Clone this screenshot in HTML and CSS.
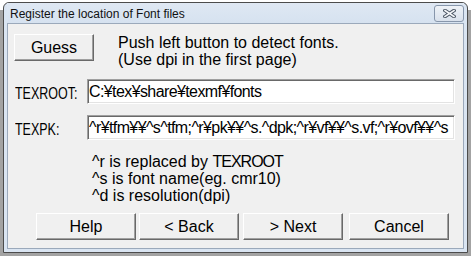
FILE: index.html
```html
<!DOCTYPE html>
<html lang="en">
<head>
    <meta charset="UTF-8">
    <title>Register the location of Font files</title>
    <link rel="stylesheet" href="styles.css">
</head>
<body>

    <div class="window">
        <div class="titlebar">
            <span class="title">Register the location of Font files</span>
            <button class="close-btn" aria-label="Close">
                <svg width="13" height="9" viewBox="0 0 13 9">
                    <path d="M2 1.5 L11 7.5 M11 1.5 L2 7.5" stroke="#4b5665" stroke-width="3.6" stroke-linecap="square"/>
                    <path d="M2 1.5 L11 7.5 M11 1.5 L2 7.5" stroke="#f4f6f9" stroke-width="1.6" stroke-linecap="square"/>
                </svg>
            </button>
        </div>

        <div class="client">
            <div class="guess-row">
                <button class="btn guess-btn">Guess</button>
                <p class="hint">Push left button to detect fonts.<br>(Use dpi in the first page)</p>
            </div>

            <div class="field">
                <label for="texroot"><span>TEXROOT:</span></label>
                <input id="texroot" type="text" value="C:¥tex¥share¥texmf¥fonts">
            </div>
            <div class="field">
                <label for="texpk"><span>TEXPK:</span></label>
                <input id="texpk" type="text" value="^r¥tfm¥¥^s^tfm;^r¥pk¥¥^s.^dpk;^r¥vf¥¥^s.vf;^r¥ovf¥¥^s">
            </div>

            <div class="legend">
                <p>^r is replaced by <span class="caps">TEXROOT</span></p>
                <p>^s is font name(eg. cmr10)</p>
                <p>^d is resolution(dpi)</p>
            </div>

            <div class="nav-row">
                <button class="btn nav-btn">Help</button>
                <button class="btn nav-btn back">&lt; Back</button>
                <button class="btn nav-btn next">&gt; Next</button>
                <button class="btn nav-btn cancel">Cancel</button>
            </div>
        </div>
    </div>

</body>
</html>
```

FILE: styles.css
```css
body {
    margin: 0;
    width: 471px;
    height: 256px;
    overflow: hidden;
    background: linear-gradient(#ffffff 0 10px, #a3a3a3 10px);
    font-family: 'Liberation Sans', Arial, sans-serif;
    color: #000;
}
.window {
    margin: 2px 0 0 3px;
    width: 465px;
    height: 251px;
    box-sizing: border-box;
    border: 1px solid #4c4c4c;
    border-radius: 6px 6px 0 0;
    background-color: #dae5f2;
    padding: 0 3px 3px 3px;
    display: flex;
    flex-direction: column;
}
.titlebar {
    height: 20px;
    display: flex;
    align-items: flex-start;
    background: linear-gradient(#dfe8f3, #d6e2f0);
}
.title {
    font-size: 12px;
    line-height: 14px;
    margin: 4px 0 0 3px;
    color: #111;
}
.close-btn {
    margin: 2px 0 0 auto;
    width: 30px;
    height: 17px;
    padding: 0;
    border: 1px solid #8796ab;
    border-radius: 3px;
    background: linear-gradient(#eef2f7, #d9e1ec);
    display: flex;
    align-items: center;
    justify-content: center;
}
.client {
    flex: 1;
    border: 1px solid #9ba9bb;
    background-color: #f0f0f0;
    padding: 10px 0 0 6px;
    font-size: 16px;
}
.btn {
    font-family: inherit;
    font-size: 16px;
    color: #000;
    background-color: #f0f0f0;
    border: 1px solid;
    border-color: #ffffff #696969 #696969 #ffffff;
    box-shadow: inset -1px -1px 0 #a0a0a0;
    padding: 0;
    height: 27px;
    box-sizing: border-box;
}
.guess-row {
    display: flex;
    align-items: flex-start;
}
.guess-btn {
    width: 80px;
}
.hint {
    margin: 0 0 0 24px;
    line-height: 17px;
}
.field {
    display: flex;
    align-items: center;
    margin-top: 11px;
}
.field label {
    width: 72px;
    padding-left: 1px;
    padding-top: 5px;
}
.field label span {
    display: inline-block;
    transform: scaleX(0.78);
    transform-origin: left center;
    white-space: nowrap;
}
.field input {
    width: 368px;
    height: 25px;
    box-sizing: border-box;
    font-family: inherit;
    font-size: 16px;
    letter-spacing: -0.6px;
    padding: 0 0 0 1px;
    background: #fff;
    border: 1px solid;
    border-color: #a0a0a0 #ffffff #ffffff #a0a0a0;
    box-shadow: inset 1px 1px 0 #696969, inset -1px -1px 0 #e3e3e3;
    outline: none;
}
.legend {
    margin: 13px 0 0 78px;
}
.legend p {
    margin: 0;
    line-height: 17px;
}
.caps {
    letter-spacing: -1px;
}
.nav-row {
    display: flex;
    margin: 9px 0 0 22px;
}
.nav-btn {
    width: 100px;
}
.back {
    margin-left: 3px;
}
.next {
    margin-left: 4px;
}
.cancel {
    margin-left: 6px;
}
```
